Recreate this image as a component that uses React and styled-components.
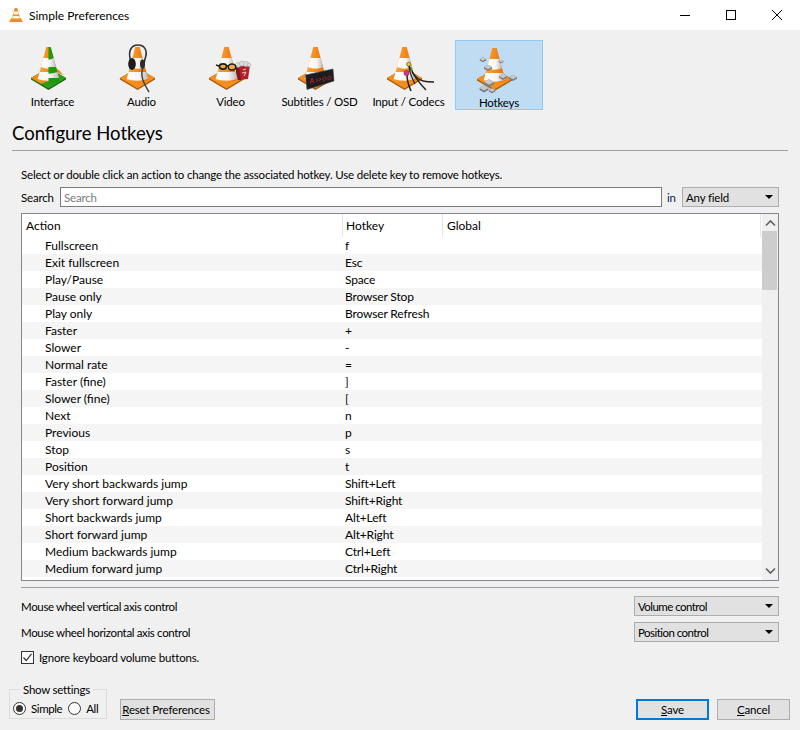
import React, { useId } from 'react';
import styled, { createGlobalStyle } from 'styled-components';

const GlobalStyle = createGlobalStyle`
  html, body {
    margin: 0;
    padding: 0;
    background: #f0f0f0;
  }
  * {
    box-sizing: border-box;
  }
  body {
    font-family: 'Lato', 'Open Sans', sans-serif;
    font-size: 11.5px;
    letter-spacing: -0.18px;
    color: #000;
  }
`;

const hotkeys = [
  ['Fullscreen', 'f'],
  ['Exit fullscreen', 'Esc'],
  ['Play/Pause', 'Space'],
  ['Pause only', 'Browser Stop'],
  ['Play only', 'Browser Refresh'],
  ['Faster', '+'],
  ['Slower', '-'],
  ['Normal rate', '='],
  ['Faster (fine)', ']'],
  ['Slower (fine)', '['],
  ['Next', 'n'],
  ['Previous', 'p'],
  ['Stop', 's'],
  ['Position', 't'],
  ['Very short backwards jump', 'Shift+Left'],
  ['Very short forward jump', 'Shift+Right'],
  ['Short backwards jump', 'Alt+Left'],
  ['Short forward jump', 'Alt+Right'],
  ['Medium backwards jump', 'Ctrl+Left'],
  ['Medium forward jump', 'Ctrl+Right'],
];

const CX = 19.5;
const halfAt = (y) => 2.2 + ((y - 3) * 8.8) / 33;
const band = (y1, y2) => {
  const a = halfAt(y1);
  const b = halfAt(y2);
  return `M${CX - a},${y1} L${CX + a},${y1} L${CX + b},${y2} Q${CX},${y2 + 3.5} ${CX - b},${y2} Z`;
};

const Cone = ({ green }) => {
  const id = useId();
  return (
    <g>
      <defs>
        <linearGradient id={`${id}o`} x1="0" x2="1" y1="0" y2="0">
          <stop offset="0" stopColor="#ffab3d" />
          <stop offset="1" stopColor="#e56c00" />
        </linearGradient>
        <linearGradient id={`${id}w`} x1="0" x2="1" y1="0" y2="0">
          <stop offset="0" stopColor="#ffffff" />
          <stop offset="0.6" stopColor="#f4f4f4" />
          <stop offset="1" stopColor="#b8b8b8" />
        </linearGradient>
        <clipPath id={`${id}c`}>
          <rect x={CX} y="0" width="30" height="50" />
        </clipPath>
      </defs>
      <polygon points="2,34 19.5,24 37,34 37,35.5 19.5,46 2,35.5" fill={green ? '#146c08' : '#a85a0a'} />
      <polygon points="2,34 19.5,24 37,34 19.5,44.5" fill={green ? '#2d9e18' : '#f28d20'} />
      {green && <polygon points="2,34 12,28 17,38 12,40" fill="#ee8a1e" />}
      <path d={band(3, 36)} fill={`url(#${id}o)`} />
      <path d={band(14, 23)} fill={`url(#${id}w)`} />
      <path d={band(28, 35)} fill={`url(#${id}w)`} />
      {green && (
        <g clipPath={`url(#${id}c)`}>
          <path d={band(3, 14)} fill="#1d9a0e" />
          <path d={band(23, 28)} fill="#1d9a0e" />
          <path d={band(34, 38)} fill="#1d9a0e" />
        </g>
      )}
    </g>
  );
};

const KeyCap = ({ x, y, s = 1 }) => (
  <g transform={`translate(${x} ${y}) scale(${s})`}>
    <polygon points="-4,0 0,-2.2 4,0 4,1.8 0,4 -4,1.8" fill="#7d7d7d" />
    <polygon points="-4,0 0,-2.2 4,0 0,2.2" fill="#c8c8c8" />
  </g>
);

const InterfaceIcon = () => (
  <IconSvg viewBox="0 0 48 48">
    <polygon points="23,17 35,31 30,30" fill="#fff" stroke="#d8d8d8" strokeWidth="0.5" />
    <polygon points="27,24 31,27 34,31 27,28" fill="#ee8a1e" />
    <Cone green />
  </IconSvg>
);

const AudioIcon = () => (
  <IconSvg viewBox="0 0 48 48">
    <Cone />
    <path d="M13,18 C9,6 14,1 20,1 C27,1 30,7 27,15 L25,24" fill="none" stroke="#333" strokeWidth="1.6" />
    <path d="M25,23 C22,32 25,38 31,48" fill="none" stroke="#444" strokeWidth="1.5" />
    <ellipse cx="14" cy="20" rx="3.8" ry="6" fill="#1c1c1c" />
    <ellipse cx="24.5" cy="20" rx="2.5" ry="4.5" fill="#2c2c2c" />
  </IconSvg>
);

const VideoIcon = () => (
  <IconSvg viewBox="0 0 48 48">
    <Cone />
    <polygon points="28,23 43,21 41,35 31,36" fill="#b3202a" />
    <polygon points="28,23 32,24 34,36 31,36" fill="#7e141c" />
    <path d="M36,26 L39,25 M35,29 L39,28 L37,32" stroke="#f2c8c8" strokeWidth="1" fill="none" />
    <g fill="#d9dcde" stroke="#8a9296" strokeWidth="0.4">
      <circle cx="31" cy="21" r="2.4" />
      <circle cx="35" cy="19.5" r="2.6" />
      <circle cx="39" cy="20" r="2.6" />
      <circle cx="42" cy="21" r="1.8" />
    </g>
    <g fill="#f0b040" stroke="#1e1e1e" strokeWidth="1.6">
      <ellipse cx="16" cy="22.5" rx="3.6" ry="2.6" />
      <ellipse cx="25" cy="23" rx="3.8" ry="3" />
    </g>
    <path d="M19,22 L22,22 M12,22 L9,21" stroke="#1e1e1e" strokeWidth="1.4" />
  </IconSvg>
);

const SubtitlesIcon = () => (
  <IconSvg viewBox="0 0 48 48">
    <Cone />
    <polygon points="9.5,31 37,25 38,37 11,45.5" fill="#1d1d1f" stroke="#4a4a4a" strokeWidth="0.6" />
    <path
      d="M14,40 L16,34 L18,39 M15,38 L17,37.5 M20,38 L22,36 L20,35 M23,37.5 L25,35 L23,34 M27,36 C26,33 30,32 30,34.5 C30,37 27,37 27,36 M32,35 C31,32 35,31 35,33.5 C35,36 32,36 32,35"
      fill="none"
      stroke="#b32030"
      strokeWidth="0.9"
    />
  </IconSvg>
);

const CodecsIcon = () => (
  <IconSvg viewBox="0 0 48 48">
    <Cone />
    <g fill="none" stroke="#222" strokeWidth="1.5">
      <path d="M22,31 C22,38 24,42 26,47" />
      <path d="M24,22 C28,30 33,38 41,46" />
      <path d="M26,26 C30,33 34,36 38,37 C42,38 46,38 49,38" strokeWidth="1.3" />
      <path d="M24,22 C24,28 27,34 30,40" strokeWidth="1.1" />
    </g>
    <circle cx="23.7" cy="20.3" r="2" fill="#e8d820" stroke="#333" strokeWidth="0.6" />
    <circle cx="21.5" cy="29" r="2.6" fill="#e0308a" stroke="#702050" strokeWidth="0.5" />
    <rect x="25.5" y="24" width="1.6" height="4" fill="#30a040" />
  </IconSvg>
);

const HotkeysIcon = () => (
  <IconSvg viewBox="0 0 48 48">
    <Cone />
    <KeyCap x={8} y={14} s={0.8} />
    <KeyCap x={26} y={16} s={0.6} />
    <KeyCap x={13} y={22} />
    <KeyCap x={28} y={31} />
    <KeyCap x={38} y={32} />
    <KeyCap x={14} y={37} s={1.2} />
    <KeyCap x={9} y={43} s={1.1} />
    <KeyCap x={17} y={45} s={0.8} />
  </IconSvg>
);

const VlcSmall = () => (
  <svg width="16" height="16" viewBox="0 0 16 16">
    <polygon points="1,15 3.5,11 12.5,11 15,15" fill="#ee8a1e" />
    <polygon points="6.7,1 9.3,1 12.6,13 3.4,13" fill="#f28d20" />
    <polygon points="5.9,4.5 10.1,4.5 10.9,7.6 5.1,7.6" fill="#f4f4f4" />
    <polygon points="4.8,9 11.2,9 11.9,11.6 4.1,11.6" fill="#f4f4f4" />
  </svg>
);

const tabs = [
  { label: 'Interface', Icon: InterfaceIcon },
  { label: 'Audio', Icon: AudioIcon },
  { label: 'Video', Icon: VideoIcon },
  { label: 'Subtitles / OSD', Icon: SubtitlesIcon },
  { label: 'Input / Codecs', Icon: CodecsIcon },
  { label: 'Hotkeys', Icon: HotkeysIcon, active: true },
];

const App = () => (
  <Window>
    <GlobalStyle />
    <TitleBar>
      <VlcSmall />
      <TitleText>Simple Preferences</TitleText>
      <WindowButton>
        <svg width="12" height="12" viewBox="0 0 12 12">
          <path d="M1 6.5 H11" stroke="#000" strokeWidth="1" />
        </svg>
      </WindowButton>
      <WindowButton>
        <svg width="12" height="12" viewBox="0 0 12 12">
          <rect x="1.5" y="1.5" width="9" height="9" fill="none" stroke="#000" strokeWidth="1" />
        </svg>
      </WindowButton>
      <WindowButton>
        <svg width="12" height="12" viewBox="0 0 12 12">
          <path d="M1 1 L11 11 M11 1 L1 11" stroke="#000" strokeWidth="1" />
        </svg>
      </WindowButton>
    </TitleBar>

    <TabBar>
      {tabs.map(({ label, Icon, active }) => (
        <Tab key={label} $active={active}>
          <Icon />
          <TabLabel>{label}</TabLabel>
        </Tab>
      ))}
    </TabBar>

    <Heading>Configure Hotkeys</Heading>
    <HeadingRule />

    <Content>
      <Hint>Select or double click an action to change the associated hotkey. Use delete key to remove hotkeys.</Hint>
      <SearchRow>
        <SearchLabel>Search</SearchLabel>
        <SearchInput placeholder="Search" readOnly />
        <InLabel>in</InLabel>
        <Combo $width={97}>Any field</Combo>
      </SearchRow>

      <Table>
        <TableMain>
          <HeaderRow>
            <HeaderCell $width={321} $pad={4}>Action</HeaderCell>
            <HeaderCell $width={100} $pad={3}>Hotkey</HeaderCell>
            <HeaderCell $pad={4}>Global</HeaderCell>
          </HeaderRow>
          {hotkeys.map(([action, key]) => (
            <Row key={action}>
              <ActionCell>{action}</ActionCell>
              <KeyCell>{key}</KeyCell>
            </Row>
          ))}
        </TableMain>
        <ScrollBar>
          <ScrollArrow>
            <svg width="11" height="8" viewBox="0 0 11 8">
              <path d="M1 6.5 L5.5 2 L10 6.5" fill="none" stroke="#606060" strokeWidth="1.6" />
            </svg>
          </ScrollArrow>
          <ScrollThumb />
          <ScrollArrow $bottom>
            <svg width="11" height="8" viewBox="0 0 11 8">
              <path d="M1 1.5 L5.5 6 L10 1.5" fill="none" stroke="#606060" strokeWidth="1.6" />
            </svg>
          </ScrollArrow>
        </ScrollBar>
      </Table>

      <Rule />

      <WheelRow>
        <span>Mouse wheel vertical axis control</span>
        <WheelCombo $width={145}>Volume control</WheelCombo>
      </WheelRow>
      <WheelRow>
        <span>Mouse wheel horizontal axis control</span>
        <WheelCombo $width={145}>Position control</WheelCombo>
      </WheelRow>

      <CheckRow>
        <CheckBox>
          <svg width="11" height="11" viewBox="0 0 11 11">
            <path d="M1.5 5.5 L4.2 8.5 L9.5 1.8" fill="none" stroke="#333" strokeWidth="1.2" />
          </svg>
        </CheckBox>
        Ignore keyboard volume buttons.
      </CheckRow>
    </Content>

    <Footer>
      <SettingsGroup>
        <SettingsLegend>Show settings</SettingsLegend>
        <RadioItem>
          <Radio $checked />
          Simple
        </RadioItem>
        <RadioItem>
          <Radio />
          All
        </RadioItem>
      </SettingsGroup>
      <ResetButton>
        <u>R</u>eset Preferences
      </ResetButton>
      <DialogButtons>
        <DialogButton $primary>
          <u>S</u>ave
        </DialogButton>
        <DialogButton>
          <u>C</u>ancel
        </DialogButton>
      </DialogButtons>
    </Footer>
  </Window>
);

const Window = styled.div`
  display: flex;
  flex-direction: column;
  width: 800px;
  height: 730px;
  overflow: hidden;
  background: #f0f0f0;
`;

const TitleBar = styled.div`
  display: flex;
  align-items: center;
  height: 30px;
  padding-left: 8px;
  background: #fff;
`;

const TitleText = styled.div`
  flex: 1;
  margin-left: 5px;
  font-size: 12px;
  letter-spacing: 0;
`;

const WindowButton = styled.div`
  display: flex;
  align-items: center;
  justify-content: center;
  width: 46px;
  height: 30px;
`;

const TabBar = styled.div`
  display: flex;
  height: 70px;
  margin-top: 10px;
  padding-left: 8px;
`;

const Tab = styled.div`
  display: flex;
  flex-direction: column;
  align-items: center;
  width: ${(p) => (p.$active ? 88 : 89)}px;
  margin-left: ${(p) => (p.$active ? 2 : 0)}px;
  padding-top: ${(p) => (p.$active ? 4 : 3)}px;
  border: 1px solid ${(p) => (p.$active ? '#91c9f7' : 'transparent')};
  background: ${(p) => (p.$active ? '#bfdcf3' : 'transparent')};
`;

const IconSvg = styled.svg`
  display: block;
  flex: none;
  width: 48px;
  height: 48px;
  overflow: visible;
`;

const TabLabel = styled.div`
  margin-top: 2px;
  line-height: 16px;
  white-space: nowrap;
`;

const Heading = styled.h1`
  margin: 11px 0 0 12px;
  height: 29px;
  font-size: 18.5px;
  font-weight: 400;
  letter-spacing: 0;
  line-height: 25px;
`;

const HeadingRule = styled.div`
  height: 1px;
  margin: 0 12px;
  background: #a0a0a0;
`;

const Content = styled.div`
  padding: 0 21px;
`;

const Hint = styled.div`
  margin-top: 16px;
  line-height: 15px;
`;

const SearchRow = styled.div`
  display: flex;
  align-items: center;
  height: 20px;
  margin-top: 5px;
`;

const SearchLabel = styled.span`
  flex: 0 0 39px;
`;

const SearchInput = styled.input`
  flex: 1;
  min-width: 0;
  height: 20px;
  margin: 0;
  padding: 0 3px;
  border: 1px solid #7a7a7a;
  outline: none;
  background: #fff;
  font: inherit;
  letter-spacing: inherit;
  &::placeholder {
    color: #787878;
    opacity: 1;
  }
`;

const InLabel = styled.span`
  flex: 0 0 20px;
  padding-left: 5px;
  color: #0a1a60;
`;

const Combo = styled.div`
  position: relative;
  flex: none;
  width: ${(p) => p.$width}px;
  height: 20px;
  padding-left: 3px;
  border: 1px solid #adadad;
  background: #e1e1e1;
  line-height: 19px;
  &::after {
    content: '';
    position: absolute;
    right: 5px;
    top: 7px;
    border-style: solid;
    border-width: 4px 4px 0;
    border-color: #000 transparent transparent;
  }
`;

const WheelCombo = styled(Combo)`
  letter-spacing: -0.55px;
`;

const Table = styled.div`
  display: flex;
  height: 368px;
  margin-top: 6px;
  padding-bottom: 3px;
  border: 1px solid #828790;
  background: #fff;
  font-size: 12px;
  letter-spacing: 0;
`;

const TableMain = styled.div`
  flex: 1;
  min-width: 0;
  overflow: hidden;
`;

const HeaderRow = styled.div`
  display: flex;
  height: 23px;
  margin-right: 1px;
`;

const HeaderCell = styled.div`
  flex: ${(p) => (p.$width ? `0 0 ${p.$width}px` : '1')};
  padding: 2px 0 0 ${(p) => p.$pad}px;
  line-height: 20px;
  border-right: 1px solid #e5e5e5;
`;

const Row = styled.div`
  display: flex;
  height: 17px;
  line-height: 17px;
  background: #fff;
  &:nth-of-type(odd) {
    background: #f5f5f5;
  }
`;

const ActionCell = styled.div`
  flex: 0 0 321px;
  padding-left: 23px;
`;

const KeyCell = styled.div`
  padding-left: 2px;
  letter-spacing: -0.15px;
`;

const ScrollBar = styled.div`
  display: flex;
  flex-direction: column;
  flex: none;
  width: 16px;
  margin-bottom: -3px;
  background: #f0f0f0;
`;

const ScrollArrow = styled.div`
  display: flex;
  align-items: center;
  justify-content: center;
  height: 17px;
  margin-top: ${(p) => (p.$bottom ? 'auto' : 0)};
  margin-bottom: ${(p) => (p.$bottom ? '1px' : 0)};
`;

const ScrollThumb = styled.div`
  height: 59px;
  margin-right: 1px;
  background: #cdcdcd;
`;

const Rule = styled.div`
  height: 1px;
  margin: 6px 0 8px;
  background: #a0a0a0;
`;

const WheelRow = styled.div`
  display: flex;
  align-items: center;
  justify-content: space-between;
  height: 20px;
  margin-bottom: 6px;
  letter-spacing: -0.35px;
`;

const CheckRow = styled.div`
  display: flex;
  align-items: center;
  gap: 5px;
  height: 14px;
  margin-top: 8px;
`;

const CheckBox = styled.span`
  display: flex;
  align-items: center;
  justify-content: center;
  width: 13px;
  height: 13px;
  border: 1px solid #333;
  background: #fbfbfb;
`;

const Footer = styled.div`
  display: flex;
  align-items: flex-end;
  margin-top: auto;
  padding: 0 10px 10px 9px;
`;

const SettingsGroup = styled.div`
  position: relative;
  display: flex;
  align-items: center;
  gap: 6px;
  width: 98px;
  height: 30px;
  margin-bottom: 1px;
  padding: 8px 0 0 3px;
  border: 1px solid #dcdcdc;
  letter-spacing: -0.4px;
`;

const SettingsLegend = styled.span`
  position: absolute;
  top: -8px;
  left: 10px;
  padding: 0 3px;
  background: #f0f0f0;
  line-height: 15px;
  letter-spacing: -0.25px;
`;

const RadioItem = styled.span`
  display: flex;
  align-items: center;
  gap: 5px;
`;

const Radio = styled.span`
  position: relative;
  flex: none;
  width: 13px;
  height: 13px;
  border: 1px solid #333;
  border-radius: 50%;
  background: #fbfbfb;
  &::after {
    content: '';
    display: ${(p) => (p.$checked ? 'block' : 'none')};
    position: absolute;
    inset: 2px;
    border-radius: 50%;
    background: #333;
  }
`;

const ResetButton = styled.div`
  width: 95px;
  height: 21px;
  margin-left: 13px;
  padding-right: 3px;
  border: 1px solid #adadad;
  background: #e1e1e1;
  line-height: 19px;
  text-align: center;
  white-space: nowrap;
`;

const DialogButtons = styled.div`
  display: flex;
  gap: 8px;
  margin-left: auto;
`;

const DialogButton = styled.div`
  width: 73px;
  height: 21px;
  border: ${(p) => (p.$primary ? '2px solid #0078d7' : '1px solid #adadad')};
  background: #e1e1e1;
  line-height: ${(p) => (p.$primary ? 17 : 19)}px;
  text-align: center;
`;

export default App;
